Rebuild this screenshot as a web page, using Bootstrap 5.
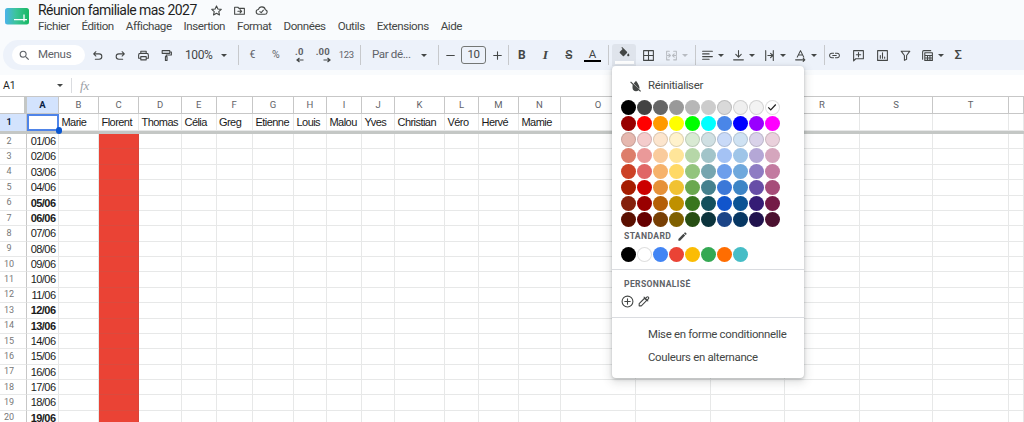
<!DOCTYPE html>
<html lang="fr">
<head>
<meta charset="utf-8">
<title>Réunion familiale mas 2027</title>
<link rel="stylesheet" href="https://cdn.jsdelivr.net/npm/bootstrap@5.3.0/dist/css/bootstrap.min.css">
<style>
html,body{height:422px;overflow:hidden;background:#fff;font-family:Roboto,"Liberation Sans",sans-serif;color:#444746}
.shell{position:relative;height:422px;overflow:hidden}
.topzone{height:75px;background:#f9fbfd}
.headline{height:40px}
.logo-box{width:38px;padding-left:5px;padding-top:8px;flex:none}
.logo-box svg{display:block}
.title-text{font-size:14px;letter-spacing:-.55px;line-height:20px;color:#1f1f1f;width:172px;white-space:nowrap}
.menu-row{font-size:11.6px;letter-spacing:-.45px;line-height:16px;gap:12px;margin-top:-2px;color:#444746}
.menu-row span{white-space:nowrap}
.head-ico{width:14px;height:14px;margin-right:9.500px}
.ico{display:block;fill:none;stroke:currentColor;stroke-width:2;width:13px;height:13px;stroke-linecap:round;stroke-linejoin:round;flex:none}
.ico-fill{fill:currentColor;stroke:none}
.tools{height:30px;margin-left:3px;padding-left:9px;background:#edf2fa;border-radius:15px 0 0 15px;font-size:12px;letter-spacing:-.4px;color:#444746}
.searchpill{width:73px;height:20px;background:#fff;border-radius:10px;padding-left:6px;margin-right:1px;gap:7px;color:#5f6368;font-size:11.5px;letter-spacing:-.3px;flex:none}
.slot{height:24px;flex:none;display:flex;align-items:center;justify-content:center}
.s23{width:23px}.s235{width:23.5px}.s22{width:22px}.s24{width:24px}.s31{width:31px}.s18{width:18px}.s29{width:29px}.s32{width:32px}
.zoomslot{width:53px;justify-content:flex-start;padding-left:7px}
.zoomslot .crt{margin-left:auto;margin-right:4px}
.fontslot{width:71px;justify-content:flex-start;padding-left:11px;color:#5f6368;font-size:11.6px}
.fontslot .crt{margin-left:auto;margin-right:5px}
.crt{width:0;height:0;border-left:3.5px solid transparent;border-right:3.5px solid transparent;border-top:3.5px solid #444746;flex:none}
.gap4{gap:4px}
.tsep{width:1px;height:20px;background:#c7c9cc;flex:none}
.sep-a{margin-left:6.5px;margin-right:2px}.sep-b{margin-left:2px}.sep-c{margin-left:6px}.sep-d{margin-right:1px}.sep-e{margin-left:3.5px;margin-right:3.5px}.sep-f{margin-left:3px;margin-right:1px}.sep-g{margin-left:3px}
.sizebox{width:25px;height:18px;border:1px solid #747775;border-radius:3px;font-size:11.5px;flex:none;color:#444746}
.lightnum{color:#5f6368;font-size:10.5px}
.tiny{font-size:9.5px;color:#5f6368}
.deci{position:relative;font-size:9.5px;font-weight:700;color:#5f6368;line-height:10px;height:16px;letter-spacing:.1px}
.deci svg{position:absolute;right:-1px;bottom:0;width:8px;height:6px}
.boldA{font-weight:700;font-size:12px;color:#444746}
.italI{font-weight:700;font-style:italic;font-family:"Liberation Serif",serif;font-size:13.5px}
.strikeS{font-size:12px;text-decoration:line-through;font-weight:500}
.colorA{display:flex;flex-direction:column;align-items:center;font-size:11.5px;line-height:12px;width:17px}
.colorA i{display:block;width:17px;height:2.5px;background:#000}
.fillbtn{width:24px;height:22px;background:#dfe4ec;border-radius:3px 3px 0 0;flex-direction:column;position:relative;align-self:flex-end;margin-bottom:4px}
.fillbtn i{display:block;width:19px;height:3px;background:#fff;margin-top:1px}
.fillbtn svg{width:13px;height:13px}
.muted-ico{color:#b8bcc2}
.muted-crt{border-top-color:#b8bcc2}
.sigma{font-size:13px;font-weight:500}
.fbar{height:21px;background:#fff;font-size:10.5px;color:#1f1f1f}
.cellref{width:68px;padding-left:3px}
.cellref .crt{margin-left:auto;margin-right:5.5px}
.fsep{width:1px;height:15px;background:#dadce0;margin-left:3px}
.fxmark{font-family:"Liberation Serif",serif;font-style:italic;font-size:13px;color:#9aa0a6;margin-left:8px}
.sheetgrid{display:grid;grid-template-columns:27px 32px 40px 40px 43px 34.5px 36.5px 41px 33px 35px 33px 50px 34px 40px 42px 75px 75px 74px 75px 73px 76px 15px;grid-template-rows:17px 16.5px 3.5px repeat(19,15.39px);border-top:1px solid #c7c7c7;font-family:"Liberation Sans",Arial,sans-serif;font-size:11px;letter-spacing:-.55px;color:#1a1a1a}
.gc{border-right:1px solid #e7e8e8;border-bottom:1px solid #e7e8e8;overflow:hidden;white-space:nowrap;line-height:14px}
.hc{display:flex;align-items:center;justify-content:center;font-family:Roboto,sans-serif;font-size:9.5px;letter-spacing:0;color:#5f6368;border-right:1px solid #c7c7c7;border-bottom:1px solid #c7c7c7;line-height:1}
.hc.corner{border-right:3px solid #c4c7c5}
.hc.on{background:#d3e3fd;font-weight:700;color:#0b1f44}
.hc.rowh{padding-right:8px;border-right:1px solid #c7c7c7;border-bottom:1px solid #e7e8e8;font-size:9px;color:#777}
.hc.rowh.on{background:#d3e3fd;color:#0b1f44;border-bottom:0}
.freeze{grid-column:1/-1;background:#c4c7c5}
.tc{padding-left:2.5px;line-height:16px}
.dc{text-align:right;padding-right:2.5px;line-height:14px}
.dc.we{font-weight:700}
.red{background:#ea4335;border-right-color:#d9463a;border-bottom-color:#db4a3d}
.sel{position:relative;overflow:visible;border:0;box-shadow:inset 0 0 0 2px #4f84e8}
.seldot{position:absolute;right:-3px;bottom:-3px;width:6.5px;height:6.5px;border-radius:50%;background:#0b57d0;z-index:3}
.fillmenu{position:absolute;left:612px;top:66px;width:192px;height:312px;background:#fff;border:0;border-radius:4px;box-shadow:0 1px 3px rgba(60,64,67,.3),0 3px 8px 2px rgba(60,64,67,.15);padding-top:10px;z-index:5;color:#444746;font-size:11.4px;letter-spacing:-.3px}
.resetrow{height:20px;padding-left:17px;gap:5px;flex:none}
.resetrow svg{width:14px;height:14px}
.swatches{display:grid;grid-template-columns:repeat(10,16px);grid-auto-rows:16px;padding-left:8.5px}
.swatches.first{margin-top:3.5px}
.swatches.std{margin-top:4.5px}
.swt{width:15.2px;height:15.2px;border-radius:50%;margin:.4px;display:flex;align-items:center;justify-content:center}
.swt.lt{box-shadow:inset 0 0 0 1px rgba(0,0,0,.13)}
.swt svg{width:10px;height:10px;color:#222}
.cap{font-size:8.6px;font-weight:700;letter-spacing:.35px;line-height:12px;color:#5f6368;padding-left:12px}
.cap.one{margin-top:2.5px;gap:6px}
.cap.one svg{width:11px;height:11px;color:#444746}
.cap.two{margin-top:7.5px}
.menuline{height:1px;margin:6.5px 9px 0 8px;background:#dadce0;opacity:1;border:0;flex:none}
.customrow{margin-top:4px;padding-left:9px;height:16px;margin-bottom:7.5px;gap:3px;flex:none}
.customrow svg{width:13px;height:13px}
.menulabel{height:23px;line-height:23px;padding:0 0 0 36px;font-size:11.4px;letter-spacing:-.3px;color:#444746;background:none;white-space:nowrap}
.labels{margin-top:5px}
.menuline.tail{margin-top:0}
</style>
</head>
<body>
<div class="shell">
  <div class="topzone">
    <div class="headline d-flex">
      <div class="logo-box">
        <svg width="24" height="17" viewBox="0 0 24 17"><defs><linearGradient id="lg" x1="0" x2="1" y1="0" y2="0"><stop offset="0" stop-color="#4bb3ea"/><stop offset=".45" stop-color="#3cc49a"/><stop offset="1" stop-color="#17b862"/></linearGradient></defs><rect width="24" height="16.5" rx="2.5" fill="url(#lg)"/><path d="M9 11.6h13M19 6.5v7" stroke="#fff" stroke-width="1.3" fill="none"/></svg>
      </div>
      <div>
        <div class="d-flex align-items-center">
          <div class="title-text">Réunion familiale mas 2027</div>
          <svg class="ico head-ico" viewBox="0 0 24 24"><path d="M12 3.500l2.600 5.700 6.200.7-4.600 4.200 1.300 6.100L12 17.100l-5.500 3.100 1.300-6.100-4.600-4.200 6.200-.7z"/></svg>
          <svg class="ico head-ico" viewBox="0 0 24 24"><path d="M3 6h6l2 2h10v11H3zM9 13.500h7M13 10.500l3 3-3 3"/></svg>
          <svg class="ico head-ico" viewBox="0 0 24 24"><path d="M7 19a4.500 4.500 0 0 1-.6-9A6.500 6.500 0 0 1 19 10.500a4.300 4.300 0 0 1-1 8.500zM9 14l2.500 2 4-4.500"/></svg>
        </div>
        <div class="menu-row d-flex">
          <span>Fichier</span><span>Édition</span><span>Affichage</span><span>Insertion</span><span>Format</span><span>Données</span><span>Outils</span><span>Extensions</span><span>Aide</span>
        </div>
      </div>
    </div>
    <div class="tools d-flex align-items-center">
      <div class="searchpill d-flex align-items-center">
        <svg class="ico ico-fill" viewBox="0 0 24 24"><path d="M15.500 14h-.79l-.28-.27A6.471 6.471 0 0 0 16 9.500 6.500 6.500 0 1 0 9.500 16c1.610 0 3.090-.59 4.230-1.570l.27.28v.79l5 4.990L20.490 19l-4.990-5zm-6 0C7.010 14 5 11.990 5 9.500S7.010 5 9.500 5 14 7.010 14 9.500 11.990 14 9.500 14z"/></svg>
        <span>Menus</span>
      </div>
      <div class="slot s23"><svg class="ico" viewBox="0 0 24 24"><path d="M9 5L5 9l4 4M5 9h10a5 5 0 0 1 0 10H8"/></svg></div>
      <div class="slot s23"><svg class="ico" viewBox="0 0 24 24"><path d="M15 5l4 4-4 4M19 9H9a5 5 0 0 0 0 10h7"/></svg></div>
      <div class="slot s23"><svg class="ico" viewBox="0 0 24 24"><path d="M7 8V4h10v4M7 17H3v-6a3 3 0 0 1 3-3h12a3 3 0 0 1 3 3v6h-4M7 14h10v6H7z"/></svg></div>
      <div class="slot s23"><svg class="ico" viewBox="0 0 24 24"><path d="M4 3h14v5H4zM18 5.500h3v5.500h-9.500v3M10 14h3v7h-3z"/></svg></div>
      <div class="slot zoomslot"><span>100%</span><span class="crt"></span></div>
      <div class="tsep sep-a"></div>
      <div class="slot s235 lightnum">€</div>
      <div class="slot s235 lightnum">%</div>
      <div class="slot s235"><span class="deci">.0<svg viewBox="0 0 16 12"><path d="M15 6H3M7 2L2 6l5 4" fill="none" stroke="#444746" stroke-width="2.400"/></svg></span></div>
      <div class="slot s235"><span class="deci">.00<svg viewBox="0 0 16 12"><path d="M1 6h12M9 2l5 4-5 4" fill="none" stroke="#444746" stroke-width="2.400"/></svg></span></div>
      <div class="slot s235 tiny">123</div>
      <div class="tsep sep-b"></div>
      <div class="slot fontslot"><span>Par dé...</span><span class="crt"></span></div>
      <div class="tsep sep-c"></div>
      <div class="slot s22"><svg class="ico" viewBox="0 0 24 24"><path d="M5 12h14"/></svg></div>
      <div class="sizebox d-flex align-items-center justify-content-center">10</div>
      <div class="slot s22"><svg class="ico" viewBox="0 0 24 24"><path d="M5 12h14M12 5v14"/></svg></div>
      <div class="tsep sep-d"></div>
      <div class="slot s235 boldA">B</div>
      <div class="slot s235 italI">I</div>
      <div class="slot s235 strikeS">S</div>
      <div class="slot s235"><span class="colorA">A<i></i></span></div>
      <div class="tsep sep-e"></div>
      <div class="slot fillbtn"><svg class="ico ico-fill" viewBox="0 0 24 24"><path d="M16.560 8.940L7.620 0 6.210 1.410l2.380 2.380-5.150 5.150c-.59.59-.59 1.540 0 2.120l5.500 5.500c.29.29.68.44 1.060.44s.77-.15 1.060-.44l5.500-5.500c.59-.58.59-1.530 0-2.120zM19 11.500s-2 2.170-2 3.500c0 1.100.9 2 2 2s2-.9 2-2c0-1.330-2-3.500-2-3.500z"/></svg><i></i></div>
      <div class="slot s24"><svg class="ico" viewBox="0 0 24 24"><path d="M3 3h18v18H3zM12 3v18M3 12h18"/></svg></div>
      <div class="slot s32 gap4 muted-ico"><svg class="ico" viewBox="0 0 24 24"><path d="M3 10V4h5M16 4h5v6M3 14v6h5M16 20h5v-6M10 12H3M7 9l3 3-3 3M14 12h7M17 9l-3 3 3 3"/></svg><span class="crt muted-crt"></span></div>
      <div class="tsep sep-f"></div>
      <div class="slot s31 gap4"><svg class="ico" viewBox="0 0 24 24"><path d="M3 4h18M3 9h12M3 14h18M3 19h12"/></svg><span class="crt"></span></div>
      <div class="slot s31 gap4"><svg class="ico" viewBox="0 0 24 24"><path d="M12 3v12M7 10l5 5 5-5M3 20h18"/></svg><span class="crt"></span></div>
      <div class="slot s31 gap4"><svg class="ico" viewBox="0 0 24 24"><path d="M5 3v18M19 3v18M9 12h9M14 8l4 4-4 4"/></svg><span class="crt"></span></div>
      <div class="slot s31 gap4"><svg class="ico" viewBox="0 0 24 24"><path d="M6 15L12 3l6 12M8 11h8M3 20h17M17 17l3 3-3 3"/></svg><span class="crt"></span></div>
      <div class="tsep sep-g"></div>
      <div class="slot s18"><svg class="ico ico-fill" viewBox="0 0 24 24"><path d="M3.900 12c0-1.710 1.390-3.100 3.100-3.100h4V7H7c-2.760 0-5 2.240-5 5s2.240 5 5 5h4v-1.900H7c-1.710 0-3.100-1.390-3.100-3.100zM8 13h8v-2H8v2zm9-6h-4v1.900h4c1.710 0 3.100 1.390 3.100 3.100s-1.390 3.100-3.100 3.100h-4V17h4c2.760 0 5-2.240 5-5s-2.240-5-5-5z"/></svg></div>
      <div class="slot s235 ms-1"><svg class="ico" viewBox="0 0 24 24"><path d="M3 3h18v15H7l-4 4zM12 6.500v8M8 10.500h8"/></svg></div>
      <div class="slot s235"><svg class="ico" viewBox="0 0 24 24"><path d="M3 3h18v18H3zM8 17v-5M12 17V7M16 17v-2"/></svg></div>
      <div class="slot s235"><svg class="ico" viewBox="0 0 24 24"><path d="M4 4h16l-6 8v7l-4 2v-9z"/></svg></div>
      <div class="slot s29 gap4"><svg class="ico" viewBox="0 0 24 24"><path d="M3 19V5a2 2 0 0 1 2-2h13M7 7h14v14H7zM7 12h14M7 16.500h14M12 12v9M16.500 12v9"/></svg><span class="crt"></span></div>
      <div class="slot s23 sigma">Σ</div>
    </div>
  </div>
  <div class="fbar d-flex align-items-center">
    <div class="cellref d-flex align-items-center"><span>A1</span><span class="crt"></span></div>
    <div class="fsep"></div>
    <div class="fxmark">fx</div>
  </div>
  <div class="sheetgrid" id="sheet"></div>

  <div class="fillmenu card">
    <div class="resetrow d-flex align-items-center">
      <svg class="ico-fill" fill="currentColor" viewBox="0 0 24 24"><path d="M12 3s-2.200 2.500-3.900 4.800l9.400 9.400c.3-.8.500-1.600.500-2.400C18 11 12 3 12 3zM3.400 4.300L2 5.700l4.300 4.300C6.100 11 6 13 6 14.800 6 18.200 8.700 21 12 21c1.700 0 3.200-.7 4.300-1.800l2.900 2.800 1.400-1.400z"/></svg>
      <span>Réinitialiser</span>
    </div>
    <div class="swatches first" id="pal"></div>
    <div class="cap one d-flex align-items-center">STANDARD
      <svg class="ico-fill" fill="currentColor" viewBox="0 0 24 24"><path d="M3 17.250V21h3.750L17.810 9.940l-3.750-3.750L3 17.250zM20.710 7.040a1 1 0 0 0 0-1.410l-2.340-2.340a1 1 0 0 0-1.410 0l-1.830 1.830 3.750 3.750 1.830-1.830z"/></svg>
    </div>
    <div class="swatches std" id="std"></div>
    <hr class="menuline">
    <div class="cap two">PERSONNALISÉ</div>
    <div class="customrow d-flex align-items-center">
      <svg class="ico" viewBox="0 0 24 24"><circle cx="12" cy="12" r="10"/><path d="M12 7v10M7 12h10"/></svg>
      <svg class="ico" viewBox="0 0 24 24"><path d="M14 6l4 4L8 20H4v-4zM13 4l7 7M16 6l2-2a2 2 0 0 1 3 3l-2 2"/></svg>
    </div>
    <hr class="menuline tail">
    <div class="labels">
      <div class="menulabel dropdown-item">Mise en forme conditionnelle</div>
      <div class="menulabel dropdown-item">Couleurs en alternance</div>
    </div>
  </div>
</div>
<script>
var cols=["","A","B","C","D","E","F","G","H","I","J","K","L","M","N","O","P","Q","R","S","T",""];
var names=["Marie","Florent","Thomas","Célia","Greg","Etienne","Louis","Malou","Yves","Christian","Véro","Hervé","Mamie"];
var weekend={"05":1,"06":1,"12":1,"13":1,"19":1};
var h="";
cols.forEach(function(c,i){h+='<div class="hc'+(i==0?' corner':'')+(c=="A"?' on':'')+'">'+c+'</div>'});
h+='<div class="hc rowh on">1</div><div class="gc sel"><span class="seldot"></span></div>';
for(var i=2;i<cols.length;i++){h+='<div class="gc tc">'+(names[i-2]||"")+'</div>'}
h+='<div class="freeze"></div>';
for(var r=2;r<=20;r++){
  var d=(r-1<10?"0":"")+(r-1);
  h+='<div class="hc rowh">'+r+'</div>';
  h+='<div class="gc dc'+(weekend[d]?' we':'')+'">'+d+'/06</div>';
  for(var i=2;i<cols.length;i++){h+='<div class="gc'+(cols[i]=="C"?' red':'')+'"></div>'}
}
document.getElementById("sheet").innerHTML=h;
var pal=["#000000 #434343 #666666 #999999 #b7b7b7 #cccccc #d9d9d9 #efefef #f3f3f3 #ffffff",
"#980000 #ff0000 #ff9900 #ffff00 #00ff00 #00ffff #4a86e8 #0000ff #9900ff #ff00ff",
"#e6b8af #f4cccc #fce5cd #fff2cc #d9ead3 #d0e0e3 #c9daf8 #cfe2f3 #d9d2e9 #ead1dc",
"#dd7e6b #ea9999 #f9cb9c #ffe599 #b6d7a8 #a2c4c9 #a4c2f4 #9fc5e8 #b4a7d6 #d5a6bd",
"#cc4125 #e06666 #f6b26b #ffd966 #93c47d #76a5af #6d9eeb #6fa8dc #8e7cc3 #c27ba0",
"#a61c00 #cc0000 #e69138 #f1c232 #6aa84f #45818e #3c78d8 #3d85c6 #674ea7 #a64d79",
"#85200c #990000 #b45f06 #bf9000 #38761d #134f5c #1155cc #0b5394 #351c75 #741b47",
"#5b0f00 #660000 #783f04 #7f6000 #274e13 #0c343d #1c4587 #073763 #20124d #4c1130"].join(" ").split(" ");
var light={"#efefef":1,"#f3f3f3":1,"#ffffff":1,"#fce5cd":1,"#fff2cc":1,"#d9ead3":1,"#d9d9d9":1,"#e6b8af":1,"#f4cccc":1,"#d0e0e3":1,"#c9daf8":1,"#cfe2f3":1,"#d9d2e9":1,"#ead1dc":1};
function sw(c,chk){var e=document.createElement("div");e.className="swt"+(light[c]?" lt":"");e.style.background=c;
 if(chk)e.innerHTML='<svg viewBox="0 0 24 24" fill="none" stroke="currentColor" stroke-width="3"><path d="M3 13l6 6L21 6"/></svg>';return e}
var pe=document.getElementById("pal");pal.forEach(function(c,i){pe.appendChild(sw(c,i==9))});
var se=document.getElementById("std");"#000000 #ffffff #4285f4 #ea4335 #fbbc04 #34a853 #ff6d01 #46bdc6".split(" ").forEach(function(c){se.appendChild(sw(c,false))});
</script>
<script src="https://cdn.jsdelivr.net/npm/bootstrap@5.3.0/dist/js/bootstrap.bundle.min.js"></script>
</body>
</html>
